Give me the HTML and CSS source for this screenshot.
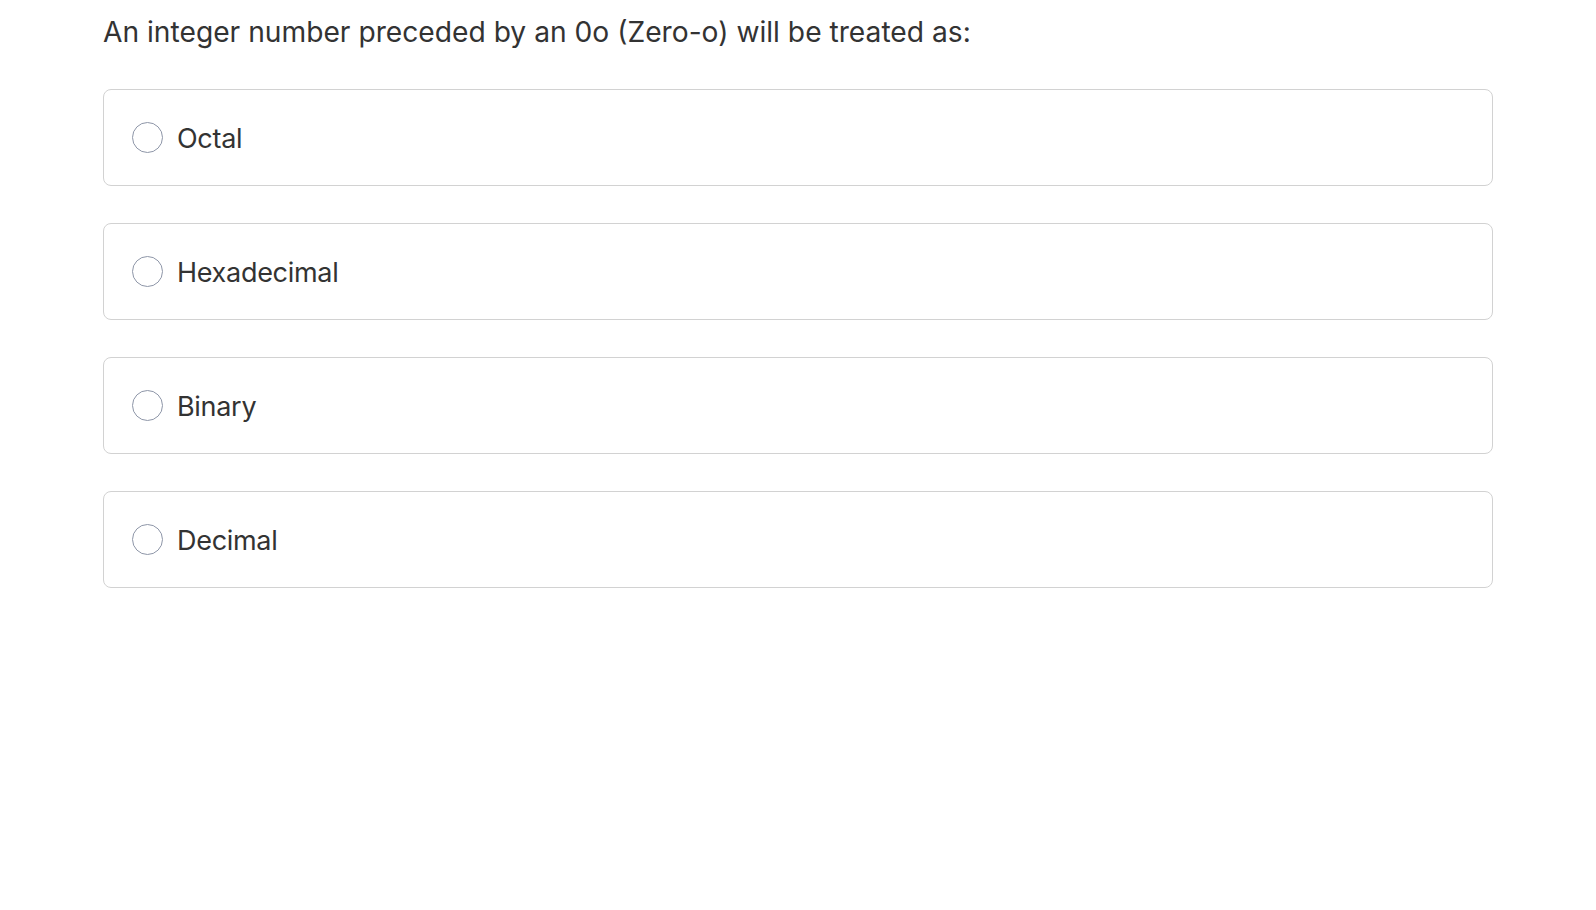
FILE: index.html
```html
<!DOCTYPE html>
<html lang="en">
<head>
<meta charset="utf-8">
<title>Question</title>
<link rel="stylesheet" href="styles.css">
</head>
<body>
<main class="quiz">
  <h1 class="question">An integer number preceded by an 0o (Zero-o) will be treated as:</h1>
  <div class="options">
    <label class="option"><span class="radio"></span><span class="label">Octal</span></label>
    <label class="option"><span class="radio"></span><span class="label">Hexadecimal</span></label>
    <label class="option"><span class="radio"></span><span class="label">Binary</span></label>
    <label class="option"><span class="radio"></span><span class="label">Decimal</span></label>
  </div>
</main>
</body>
</html>
```

FILE: styles.css
```css
html, body {
  margin: 0;
  padding: 0;
  background: #ffffff;
}
body {
  font-family: Inter, "Noto Sans", Roboto, "Liberation Sans", sans-serif;
  color: #333333;
}
.quiz {
  width: 1390px;
  padding: 14px 0 0 103px;
}
.question {
  margin: 0;
  font-size: 28.2px;
  font-weight: 400;
  line-height: 36px;
  color: #333333;
}
.options {
  margin-top: 39px;
  display: flex;
  flex-direction: column;
  gap: 37px;
}
.option {
  box-sizing: border-box;
  height: 97px;
  display: flex;
  align-items: center;
  gap: 14px;
  padding: 0 28px;
  border: 1px solid #d2d2d2;
  border-radius: 8px;
  cursor: pointer;
}
.radio {
  box-sizing: border-box;
  width: 31px;
  height: 31px;
  border: 1.3px solid #8e96a8;
  border-radius: 50%;
  flex: none;
}
.label {
  font-size: 27px;
  letter-spacing: -0.3px;
  line-height: 36px;
  color: #333333;
  position: relative;
  top: 1px;
}
```
